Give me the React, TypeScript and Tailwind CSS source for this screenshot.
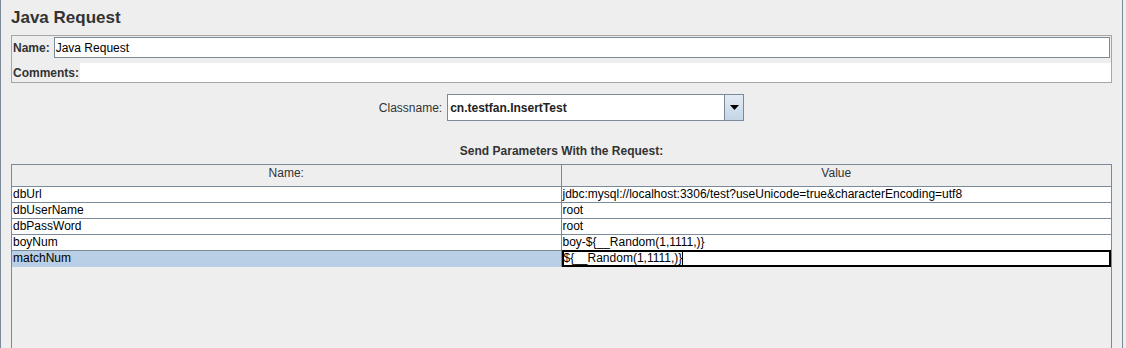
import React from "react";

const rows = [
  { name: "dbUrl", value: "jdbc:mysql://localhost:3306/test?useUnicode=true&characterEncoding=utf8" },
  { name: "dbUserName", value: "root" },
  { name: "dbPassWord", value: "root" },
  { name: "boyNum", value: "boy-${__Random(1,1111,)}" },
  { name: "matchNum", value: "${__Random(1,1111,)}", editing: true },
];

const App = () => {
  return (
    <div
      className="w-[1126px] h-[348px] bg-[#eeeeee] overflow-hidden text-[12px]"
      style={{ fontFamily: '"Liberation Sans", Arial, sans-serif' }}
    >
      <div className="w-[1123px] h-full border-l border-r border-[#7a8a99] px-[10px] flex flex-col">
        <div className="h-[35px] pt-[8px] leading-[20px] text-[17px] font-bold text-[#333333]">
          Java Request
        </div>

        {/* name / comments */}
        <div className="border border-[#a6a6a6] flex flex-col">
          <div className="h-[23px] flex items-center">
            <span className="pl-[1px] pr-[4px] font-bold text-[#333333] leading-[14px]">Name:</span>
            <div className="flex-1 h-[21px] mr-[1px] bg-white border border-[#7a8a99] flex items-center pl-[1px] leading-[14px] text-black">
              Java Request
            </div>
          </div>
          <div className="h-[19px] mt-[4px] flex items-center">
            <span className="pl-[1px] font-bold text-[#333333] leading-[14px]">Comments:</span>
            <div className="flex-1 h-full bg-white ml-[1px]" />
          </div>
        </div>

        {/* classname */}
        <div className="mt-[11px] flex justify-center items-center gap-[5px]">
          <span className="text-[#333333] leading-[14px]">Classname:</span>
          <div className="w-[297px] h-[27px] border border-[#7a8a99] flex bg-white">
            <div className="flex-1 flex items-center pl-[2px] font-bold text-[#222222] leading-[14px]">
              cn.testfan.InsertTest
            </div>
            <div className="w-[19px] border-l border-[#7a8a99] bg-gradient-to-b from-[#e3ebf3] to-[#c3d5e7] flex items-center justify-center">
              <svg width="9" height="5" viewBox="0 0 9 5">
                <path d="M0 0h9L4.5 5z" fill="#000" />
              </svg>
            </div>
          </div>
        </div>

        <div className="mt-[23px] mb-[6px] text-center font-bold text-[#333333] leading-[14px]">
          Send Parameters With the Request:
        </div>

        {/* table */}
        <div className="flex-1 border-l border-r border-t border-[#7a8a99] flex flex-col">
          <div className="grid grid-cols-2 h-[22px] border-b border-[#7a8a99] text-[#333333]">
            <div className="text-center pt-[1px] leading-[14px] border-r border-[#7a8a99]">Name:</div>
            <div className="text-center pt-[1px] leading-[14px]">Value</div>
          </div>
          {rows.map((r) => (
            <div key={r.name} className="grid grid-cols-2 h-[16px] border-b border-[#7a8a99] text-black">
              <div
                className={`pl-[1px] leading-[15px] border-r border-[#7a8a99] ${
                  r.editing ? "bg-[#b8cfe5]" : "bg-white"
                }`}
              >
                {r.name}
              </div>
              {r.editing ? (
                <div className="bg-white -mt-px h-[17px] pt-[1px] pl-[2px] leading-[15px] whitespace-nowrap shadow-[inset_0_0_0_2px_#000] flex">
                  <span>{r.value}</span>
                  <span className="w-px h-[13px] mt-[1px] bg-black" />
                </div>
              ) : (
                <div className="bg-white pl-[1px] leading-[15px] whitespace-nowrap">{r.value}</div>
              )}
            </div>
          ))}
        </div>
      </div>
    </div>
  );
};

export default App;
